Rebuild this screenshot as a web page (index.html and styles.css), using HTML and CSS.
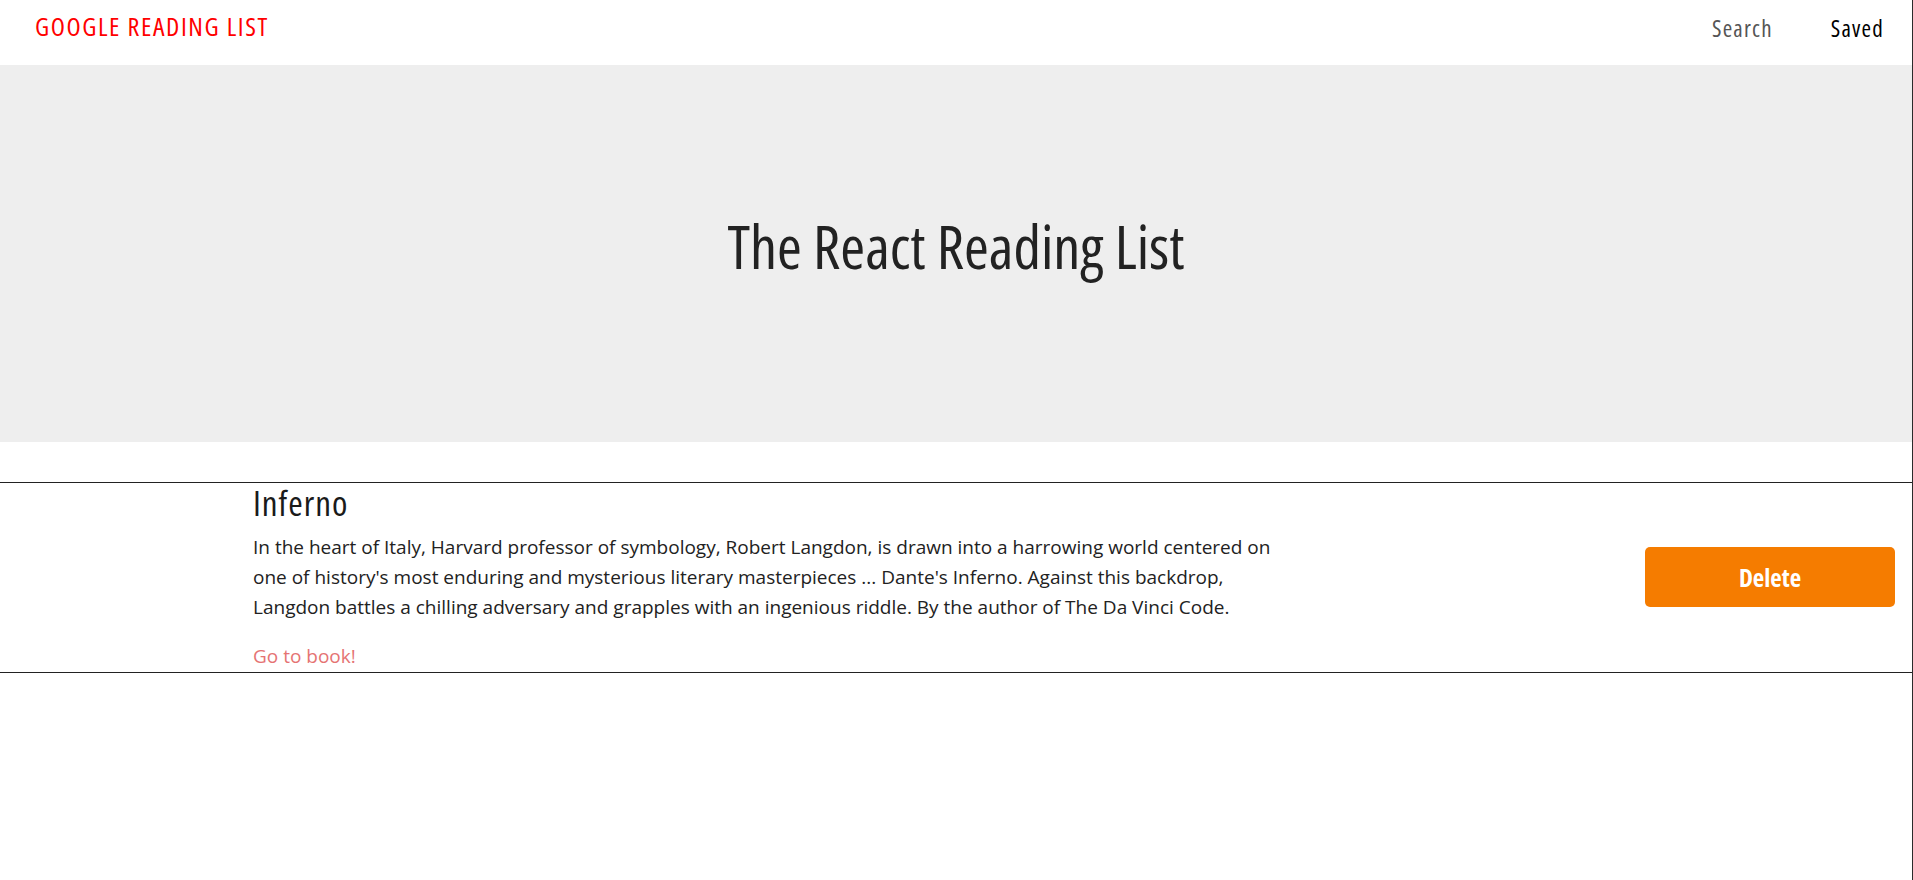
FILE: index.html
```html
<!DOCTYPE html>
<html lang="en">
<head>
<meta charset="utf-8">
<title>Google Reading List</title>
<link rel="stylesheet" href="styles.css">
</head>
<body>
<div class="page">
  <nav class="nav">
    <a class="brand" href="#">GOOGLE READING LIST</a>
    <ul class="nav-links">
      <li><a class="nav-link" href="#">Search</a></li>
      <li><a class="nav-link active" href="#">Saved</a></li>
    </ul>
  </nav>
  <header class="hero">
    <h1 class="hero-title">The React Reading List</h1>
  </header>
  <main class="list">
    <article class="book">
      <div class="book-info">
        <h2 class="book-title">Inferno</h2>
        <p class="book-desc">In the heart of Italy, Harvard professor of symbology, Robert Langdon, is drawn into a harrowing world centered on one of history's most enduring and mysterious literary masterpieces ... Dante's Inferno. Against this backdrop, Langdon battles a chilling adversary and grapples with an ingenious riddle. By the author of The Da Vinci Code.</p>
        <a class="book-link" href="#">Go to book!</a>
      </div>
      <button class="btn-delete" type="button">Delete</button>
    </article>
  </main>
</div>
</body>
</html>
```

FILE: styles.css
```css
html, body {
  margin: 0;
  padding: 0;
  background: #fff;
}

.page {
  min-height: 880px;
  width: 1912px;
  border-right: 1px solid #2b2b2b;
}

.brand,
.nav-link,
.hero-title,
.book-title,
.btn-delete {
  font-family: "Open Sans", "Roboto", sans-serif;
  font-stretch: 75%;
}

.nav {
  height: 65px;
  display: flex;
  align-items: flex-start;
  justify-content: space-between;
  padding: 11px 28px 0 35px;
  box-sizing: border-box;
}

.brand {
  color: #ff0000;
  font-size: 26px;
  letter-spacing: 1.6px;
  line-height: 30px;
  text-decoration: none;
}

.nav-links {
  list-style: none;
  margin: 2px 0 0;
  padding: 0;
  display: flex;
  gap: 58px;
}

.nav-link {
  font-size: 23px;
  letter-spacing: 1.2px;
  line-height: 30px;
  color: #555;
  text-decoration: none;
}

.nav-link.active {
  color: #000;
}

.hero {
  height: 377px;
  box-sizing: border-box;
  padding-bottom: 16px;
  background: #eeeeee;
  display: flex;
  align-items: center;
  justify-content: center;
}

.hero-title {
  margin: 0;
  font-size: 60px;
  line-height: 72px;
  font-weight: 400;
  color: #222;
}

.list {
  margin-top: 40px;
}

.book {
  border-top: 1px solid #222;
  border-bottom: 1px solid #222;
  display: flex;
  align-items: center;
  justify-content: space-between;
  padding: 0 17px 1px 253px;
}

.book-info {
  width: 1035px;
}

.book-title {
  margin: 0;
  font-size: 35px;
  letter-spacing: 1px;
  line-height: 40px;
  font-weight: 400;
  color: #1a1a1a;
}

.book-desc {
  margin: 9px 0 19px;
  font-family: "Open Sans", "Noto Sans", sans-serif;
  font-size: 19px;
  line-height: 30px;
  color: #222;
}

.book-link {
  display: block;
  font-family: "Open Sans", "Noto Sans", sans-serif;
  font-size: 19px;
  line-height: 30px;
  color: #e57373;
  text-decoration: none;
}

.btn-delete {
  width: 250px;
  height: 60px;
  border: 0;
  border-radius: 5px;
  background: #f57c00;
  color: #fff;
  font-size: 25px;
  font-weight: 700;
  cursor: pointer;
}
```
